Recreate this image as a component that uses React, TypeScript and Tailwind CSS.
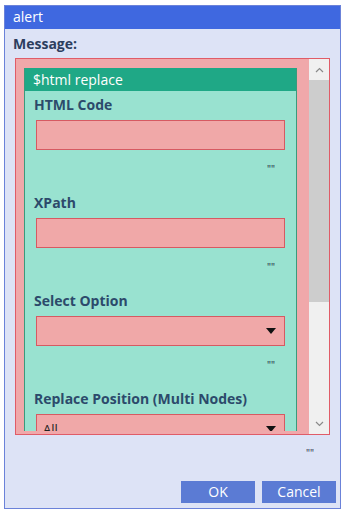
import { ReactNode } from "react";

const Quote = () => (
  <div className="flex h-[20px] items-center justify-end pr-[21px] text-[10px] leading-none text-[#1f2f40]">
    ""
  </div>
);

const Label = ({ children }: { children: ReactNode }) => (
  <div className="h-[20px] pl-[9px] text-[14px] font-bold leading-[20px] text-[#2c4a6b]">{children}</div>
);

const Arrow = () => (
  <svg width="10" height="6" viewBox="0 0 10 6" className="shrink-0">
    <path d="M0 0 L10 0 L5 6 Z" fill="#111" />
  </svg>
);

const Field = ({ label, select, value }: { label: string; select?: boolean; value?: string }) => (
  <div className="mb-[14px]">
    <Label>{label}</Label>
    <div className="mx-[11px] mt-[5px] flex h-[30px] items-center justify-between border border-[#d65a62] bg-[#f0a8a8] pl-[6px] pr-[8px] text-[13px] text-[#222]">
      <span className="pt-[2px]">{value}</span>
      {select && <Arrow />}
    </div>
    {!select || label === "Select Option" ? <div className="mt-[9px]"><Quote /></div> : null}
  </div>
);

export default function App() {
  return (
    <div className="h-[513px] w-[349px] bg-white pl-[4px] pt-[5px] font-['Open_Sans',sans-serif]">
      <div className="flex h-[504px] w-[337px] flex-col border border-[#6b82d9] bg-[#dde3f6]">
        {/* Title */}
        <div className="h-[23px] bg-[#3f68e0] pl-[8px] text-[14px] leading-[22px] text-white">alert</div>

        <div className="flex flex-1 flex-col px-[10px]">
          <div className="-ml-[2px] mt-[2px] text-[14px] font-bold leading-[26px] text-[#2c3e5e]">Message:</div>

          {/* red panel */}
          <div className="mt-[1px] flex h-[377px] border border-[#e05c68] bg-[#f0a8aa]">
            <div className="flex-1 overflow-hidden pb-[3px] pl-[8px] pr-[12px] pt-[9px]">
              <div className="h-full overflow-hidden border-l border-r border-[#3a9a7c] bg-[#99e2d0]">
                <div className="h-[23px] bg-[#1fa886] pl-[8px] text-[14px] leading-[23px] text-white">$html replace</div>
                <div className="pt-[4px]">
                  <Field label="HTML Code" />
                  <Field label="XPath" />
                  <Field label="Select Option" select />
                  <Field label="Replace Position (Multi Nodes)" select value="All" />
                </div>
              </div>
            </div>
            {/* scrollbar */}
            <div className="flex w-[20px] flex-col bg-[#f0f0f0]">
              <div className="flex h-[21px] items-center justify-center">
                <svg width="9" height="6" viewBox="0 0 9 6"><path d="M1 5 L4.5 1.5 L8 5" fill="none" stroke="#8a8a8a" strokeWidth="1.2" /></svg>
              </div>
              <div className="h-[222px] bg-[#cdcdcd]" />
              <div className="flex-1" />
              <div className="flex h-[21px] items-center justify-center">
                <svg width="9" height="6" viewBox="0 0 9 6"><path d="M1 1 L4.5 4.5 L8 1" fill="none" stroke="#8a8a8a" strokeWidth="1.2" /></svg>
              </div>
            </div>
          </div>

          <div className="mt-[12px] flex h-[12px] items-center justify-end pr-[16px] text-[10px] leading-none text-[#1f2f40]">""</div>

          <div className="-mr-[6px] mt-[22px] flex justify-end gap-[7px]">
            <button className="h-[22px] w-[74px] bg-[#5b7bd4] text-[14px] leading-[22px] text-white">OK</button>
            <button className="h-[22px] w-[74px] bg-[#5b7bd4] text-[14px] leading-[22px] text-white">Cancel</button>
          </div>
        </div>
      </div>
    </div>
  );
}
